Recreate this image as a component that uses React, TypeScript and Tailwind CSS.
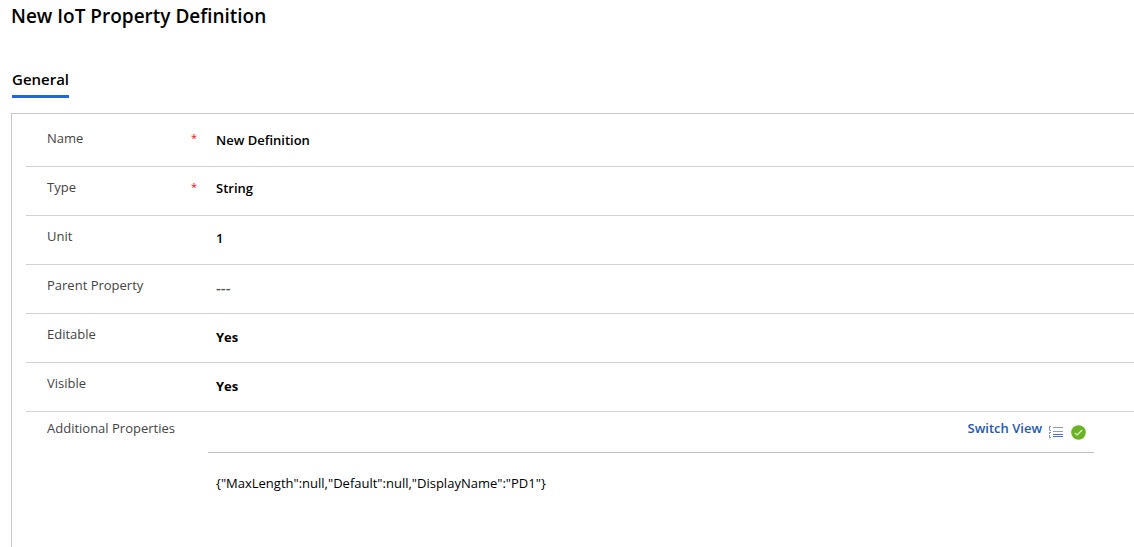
import React from 'react';

type Field = {
  id: string;
  label: string;
  value: string;
  kind: 'text' | 'select';
  required?: boolean;
  options?: string[];
  style: string;
};

const fields: Field[] = [
  { id: 'name', label: 'Name', value: 'New Definition', kind: 'text', required: true, style: 'mt-[10px] text-[13px] font-semibold text-black' },
  { id: 'type', label: 'Type', value: 'String', kind: 'select', required: true, options: ['String'], style: 'mt-[10px] text-[13px] font-semibold text-black' },
  { id: 'unit', label: 'Unit', value: '1', kind: 'text', style: 'mt-[10px] text-[13px] font-semibold text-black' },
  { id: 'parent', label: 'Parent Property', value: '---', kind: 'text', style: 'mt-[10px] text-[15px] font-semibold text-[#555555]' },
  { id: 'editable', label: 'Editable', value: 'Yes', kind: 'select', options: ['Yes', 'No'], style: 'mt-3 text-[13px] font-bold text-black' },
  { id: 'visible', label: 'Visible', value: 'Yes', kind: 'select', options: ['Yes', 'No'], style: 'mt-3 text-[13px] font-bold text-black' },
];

const ListIcon = () => (
  <svg width="14" height="12" viewBox="0 0 14 12" fill="none" aria-hidden="true">
    <path d="M4 1.5h10M4 5.5h10" stroke="#8c9bd0" />
    <path d="M4 8.5h10M4 10.5h10" stroke="#4a70bd" />
    <path d="M2 .5H.5V4M2 4.5H.5M2 6.5H.5V8M.5 9v2.5H2" stroke="#7d8cc0" />
  </svg>
);

const CheckIcon = () => (
  <svg width="15" height="15" viewBox="0 0 15 15" fill="none" aria-hidden="true">
    <circle cx="7.5" cy="7.5" r="7.3" fill="#6bb324" />
    <path d="M3.8 7.8l2.3 2.2L11.2 5" stroke="#e4f2d6" strokeWidth="1.1" />
  </svg>
);

const FieldRow = ({ field }: { field: Field }) => (
  <div className="flex h-[49px] items-start border-b border-[#d2d2d2] pl-[21px]">
    <label
      htmlFor={field.id}
      className="mt-[10px] flex w-[161px] shrink-0 justify-between pr-[11px] text-[13px] leading-5 text-[#444444]"
    >
      {field.label}
      {field.required && <span className="text-[11px] leading-5 text-[#e81123]">*</span>}
    </label>
    {field.kind === 'select' ? (
      <select
        id={field.id}
        defaultValue={field.value}
        className={`h-6 min-w-0 flex-1 appearance-none bg-transparent px-2 outline-none ${field.style}`}
      >
        {field.options?.map((option) => (
          <option key={option}>{option}</option>
        ))}
      </select>
    ) : (
      <input
        id={field.id}
        type="text"
        defaultValue={field.value}
        className={`h-6 min-w-0 flex-1 bg-transparent px-2 outline-none ${field.style}`}
      />
    )}
  </div>
);

const App = () => {
  return (
    <main
      className="flex min-h-screen flex-col bg-white pl-[11px] text-black"
      style={{ fontFamily: '"Open Sans", "Noto Sans", sans-serif' }}
    >
      <h1 className="pt-1 text-[19px] font-semibold leading-6">New IoT Property Definition</h1>

      <div role="tablist" className="mt-10 flex pl-px">
        <button
          type="button"
          role="tab"
          aria-selected="true"
          className="border-b-[3px] border-[#2266e3] pb-[5px] text-[15px] font-semibold leading-[22px]"
        >
          General
        </button>
      </div>

      <form className="mt-[15px] flex-1 border-l border-t border-[#c8c8c8] pl-[14px] pt-1">
        {fields.map((field) => (
          <FieldRow key={field.id} field={field} />
        ))}

        <div className="flex items-start pl-[21px]">
          <label htmlFor="additional" className="mt-[6px] w-[161px] shrink-0 text-[13px] leading-5 text-[#444444]">
            Additional Properties
          </label>
          <div className="mr-10 min-w-0 flex-1">
            <div className="flex h-[41px] items-start justify-end border-b border-[#bdbdbd] pr-2">
              <button
                type="button"
                className="mt-[6px] flex text-[13px] font-semibold leading-5 text-[#2458b3]"
              >
                Switch View
                <span className="ml-[7px] mt-2">
                  <ListIcon />
                </span>
              </button>
              <span className="ml-2 mt-[13px]">
                <CheckIcon />
              </span>
            </div>
            <textarea
              id="additional"
              defaultValue={'{"MaxLength":null,"Default":null,"DisplayName":"PD1"}'}
              className="mt-5 block h-16 w-full resize-none bg-transparent px-2 text-[13px] leading-5 text-black outline-none"
            />
          </div>
        </div>
      </form>
    </main>
  );
};

export default App;
